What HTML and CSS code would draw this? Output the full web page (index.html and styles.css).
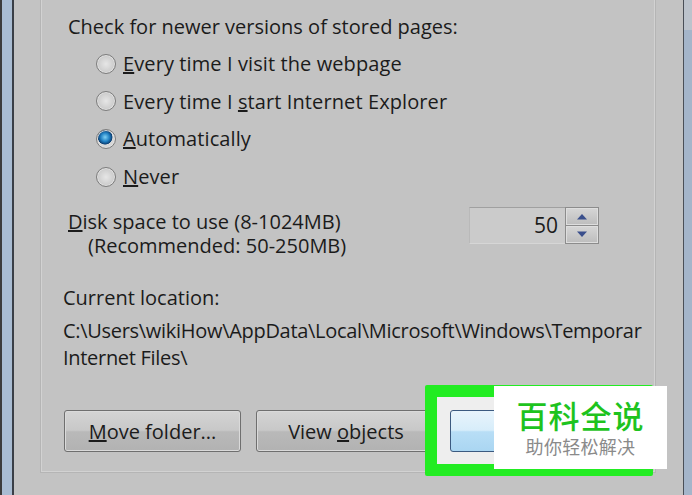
FILE: index.html
```html
<!DOCTYPE html>
<html>
<head>
<meta charset="utf-8">
<link rel="stylesheet" href="styles.css">
</head>
<body>
<div class="screen">
  <div class="edge-left"></div>
  <div class="dialog">
    <div class="group">
      <p class="heading">Check for newer versions of stored pages:</p>
      <div class="radios">
        <div class="radio"><span class="circle"></span><span><u>E</u>very time I visit the webpage</span></div>
        <div class="radio"><span class="circle"></span><span>Every time I <u>s</u>tart Internet Explorer</span></div>
        <div class="radio"><span class="circle checked"></span><span><u>A</u>utomatically</span></div>
        <div class="radio"><span class="circle"></span><span><u>N</u>ever</span></div>
      </div>
      <div class="disk">
        <div class="disk-text">
          <div><u>D</u>isk space to use (8-1024MB)</div>
          <div class="rec">(Recommended: 50-250MB)</div>
        </div>
        <div class="spin">
          <div class="spin-field">50</div>
          <div class="spin-btns">
            <div class="spin-btn"><svg width="12" height="7" viewBox="0 0 12 7"><path d="M1 6.5 L6 1 L11 6.5 Z" fill="#3a4f8c"/></svg></div>
            <div class="spin-btn"><svg width="12" height="7" viewBox="0 0 12 7"><path d="M1 0.5 L6 6 L11 0.5 Z" fill="#3a4f8c"/></svg></div>
          </div>
        </div>
      </div>
      <div class="loc">
        <div class="loc-label">Current location:</div>
        <div class="loc-path">C:\Users\wikiHow\AppData\Local\Microsoft\Windows\Temporar</div>
        <div class="loc-path2">Internet Files\</div>
      </div>
      <div class="buttons">
        <div class="btn btn-move"><span><u>M</u>ove folder...</span></div>
        <div class="btn btn-view"><span>View <u>o</u>bjects</span></div>
      </div>
    </div>
  </div>
  <div class="edge-right"><div class="edge-right-top"></div></div>
  <div class="highlight">
    <div class="hl-inner"><div class="hl-btn"></div></div>
  </div>
  <div class="watermark">
    <div class="wm-title">百科全说</div>
    <div class="wm-sub">助你轻松解决</div>
  </div>
</div>
</body>
</html>
```

FILE: styles.css
```css
html, body {
  margin: 0;
  padding: 0;
}
body {
  width: 692px;
  height: 495px;
  overflow: hidden;
  background: #c3c3c3;
  font-family: "Open Sans", "Noto Sans", "Liberation Sans", sans-serif;
  color: #1b1b1b;
}
.screen {
  position: relative;
  display: flex;
  width: 692px;
  height: 495px;
}
.edge-left {
  width: 14px;
  flex: none;
  background: linear-gradient(to right, #3c3c3c 0, #3c3c3c 2px, #a9bcd2 2px, #a9bcd2 12px, #3a3f47 12px, #3a3f47 14px);
}
.dialog {
  flex: 1;
  background: #c3c3c3;
  padding: 0 27px 0 26px;
}
.edge-right {
  width: 8px;
  flex: none;
  border-left: 1px solid #4a4f57;
  background: #a4b5ca;
}
.edge-right-top {
  height: 30px;
  background: #bcc3cc;
}
.group {
  height: 473px;
  border: 1px solid #b5b5b5;
  border-top: none;
  box-shadow: inset 1px 0 #d2d2d2, inset -1px 0 #d2d2d2, inset 0 -1px #d2d2d2;
  box-sizing: border-box;
  padding: 13px 0 0 27px;
  font-size: 20px;
}
.heading {
  margin: 0;
  height: 28px;
  line-height: 28px;
}
.radios {
  margin-top: 4px;
  padding-left: 28px;
}
.radio {
  display: flex;
  align-items: center;
  height: 37.6px;
  letter-spacing: 0.1px;
}
.circle {
  width: 18px;
  height: 18px;
  border-radius: 50%;
  border: 1px solid #7d7d7d;
  background: radial-gradient(circle at 50% 50%, #e6e6e6 0, #d0d0d0 55%, #b4b4b4 100%);
  margin-right: 7px;
  flex: none;
  box-shadow: inset 0 0 0 1px #e2e2e2;
}
.circle.checked {
  background: radial-gradient(circle at 45% 40%, #7fd0f4 0, #1f7fc2 30%, #0d3f72 48%, #d8d8d8 52%, #cfcfcf 100%);
}
.disk {
  display: flex;
  margin-top: 15px;
}
.disk-text {
  width: 401px;
  line-height: 24px;
}
.rec {
  padding-left: 20px;
}
.spin {
  display: flex;
  margin-top: -3px;
  height: 37px;
}
.spin-field {
  width: 96px;
  height: 37px;
  box-sizing: border-box;
  background: #cbcbcb;
  border-top: 1px solid #a0a0a0;
  border-left: 1px solid #b9b9b9;
  border-bottom: 1px solid #d6d6d6;
  text-align: right;
  padding-right: 7px;
  line-height: 35px;
  font-size: 21px;
}
.spin-btns {
  display: flex;
  flex-direction: column;
  width: 34px;
}
.spin-btn {
  flex: 1;
  border: 1px solid #8c8c8c;
  background: linear-gradient(#d6d6d6, #bdbdbd);
  display: flex;
  align-items: center;
  justify-content: center;
  box-shadow: inset 0 0 0 1px #dedede;
}
.spin-btn + .spin-btn {
  border-top: none;
}
.loc {
  margin-top: 26px;
  margin-left: -5px;
  letter-spacing: -0.3px;
  line-height: 27px;
}
.loc-label {
  letter-spacing: 0;
}
.loc-path {
  margin-top: 6px;
  white-space: nowrap;
}
.buttons {
  display: flex;
  gap: 15px;
  margin-top: 39px;
  margin-left: -4px;
}
.btn {
  height: 42px;
  box-sizing: border-box;
  border: 1px solid #6f6f6f;
  border-radius: 3px;
  background: linear-gradient(#d4d4d4 0, #c8c8c8 48%, #b9b9b9 52%, #b2b2b2 100%);
  box-shadow: inset 0 0 0 1px #dadada;
  display: flex;
  align-items: center;
  justify-content: center;
}
.btn-move {
  width: 177px;
}
.btn-view {
  width: 180px;
}
.highlight {
  position: absolute;
  left: 425px;
  top: 385px;
  width: 228px;
  height: 91px;
  box-sizing: border-box;
  background: #22ec22;
  border-radius: 2px;
  padding: 12px;
}
.hl-inner {
  background: #eeeeee;
  height: 100%;
  padding: 13px 0 0 13px;
  box-sizing: border-box;
}
.hl-btn {
  width: 120px;
  height: 42px;
  box-sizing: border-box;
  border: 1px solid #3c5a80;
  border-radius: 3px;
  background: linear-gradient(#e8f4fc 0, #d7edfa 48%, #b8def6 52%, #aad6f2 100%);
}
.watermark {
  position: absolute;
  left: 494px;
  top: 386px;
  width: 173px;
  height: 83px;
  background: #ffffff;
  display: flex;
  flex-direction: column;
  align-items: center;
  font-family: "Noto Sans CJK SC", sans-serif;
}
.wm-title {
  margin-top: 11px;
  font-size: 31px;
  line-height: 36px;
  color: #1ec31e;
  font-weight: 500;
  letter-spacing: 1px;
}
.wm-sub {
  margin-top: 2px;
  font-size: 18px;
  line-height: 22px;
  color: #8a8a8a;
  letter-spacing: 0.3px;
}
```
